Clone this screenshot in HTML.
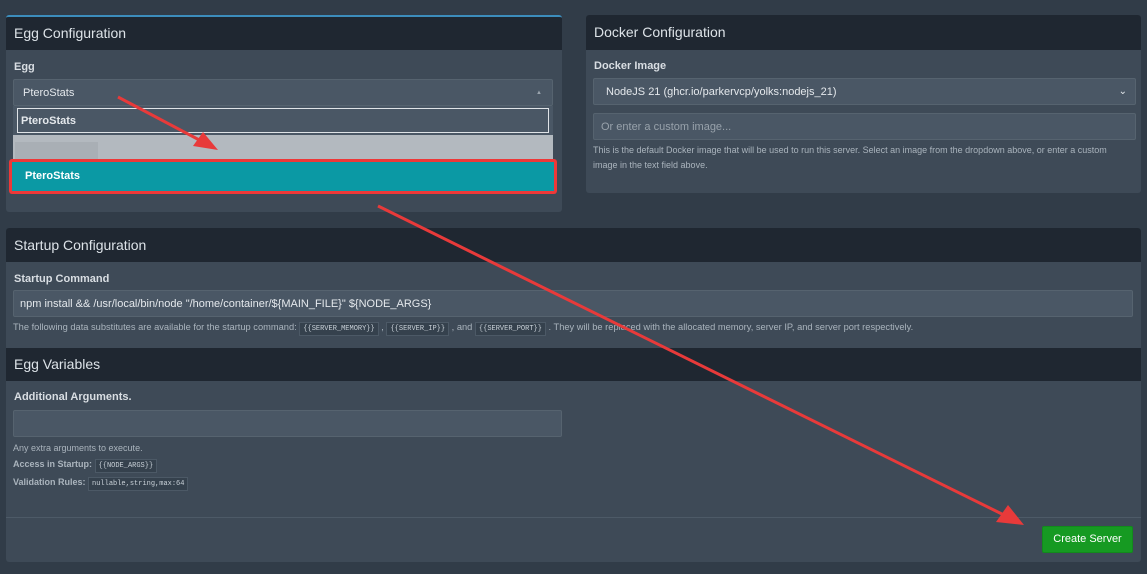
<!DOCTYPE html>
<html><head><style>
*{box-sizing:border-box;margin:0;padding:0}
body{width:1147px;height:574px;background:#313c48;font-family:"Liberation Sans",sans-serif;color:#cad1d8;position:relative;overflow:hidden;font-size:11px}
.box{position:absolute;background:#3e4a57;border-radius:3px;overflow:hidden}
.hd{background:#1f2731;height:34px;color:#dde3e8;font-size:14px;padding:9px 8px}
.lbl{position:absolute;font-weight:bold;font-size:11px;color:#d9dee3}
.inp{position:absolute;background:#4a5765;border:1px solid #56636f;border-radius:2px;color:#e4e8ec;font-size:11px;padding:0 12px;display:flex;align-items:center}
.help{position:absolute;font-size:9px;color:#aab4bd;line-height:15px}
code{font-family:"Liberation Mono",monospace;font-size:7px;background:#35414d;border:1px solid #4c5966;padding:2px 3px;color:#c9d1d8}
</style></head><body>
<div class="box" style="left:6px;top:15px;width:556px;height:197px;border-top:2px solid #3c8dbc">
<div class="hd" style="height:33px;padding-top:8px">Egg Configuration</div>
<div class="lbl" style="left:8px;top:44px">Egg</div>
<div class="inp" style="left:7px;top:62px;width:540px;height:27px;padding-left:9px">PteroStats<span style="position:absolute;right:10px;font-size:6px;color:#9aa4ad">▲</span></div>
<div style="position:absolute;left:7px;top:89px;width:540px;height:29px;background:#4a5765"></div>
<div style="position:absolute;left:11px;top:91px;width:532px;height:25px;border:1px solid #dfe3e7;color:#e4e8ec;font-weight:bold;font-size:11px;padding:6px 3px">PteroStats</div>
<div style="position:absolute;left:7px;top:118px;width:540px;height:24px;background:#b3b9bf"></div>
<div style="position:absolute;left:9px;top:125px;width:83px;height:17px;background:#a9afb5"></div>
<div style="position:absolute;left:3px;top:142px;width:548px;height:35px;background:#ee3838;border-radius:3px;padding:3px"><div style="background:#0b99a4;height:29px;color:#fff;font-weight:bold;font-size:11px;padding:8px 13px">PteroStats</div></div>
</div>
<div class="box" style="left:586px;top:15px;width:555px;height:178px">
<div class="hd" style="padding-top:9px;height:35px">Docker Configuration</div>
<div class="lbl" style="left:8px;top:45px">Docker Image</div>
<div class="inp" style="left:7px;top:63px;width:543px;height:27px;font-size:11px">NodeJS 21 (ghcr.io/parkervcp/yolks:nodejs_21)<span style="position:absolute;right:8px;font-size:10px">⌄</span></div>
<div class="inp" style="left:7px;top:98px;width:543px;height:27px;color:#98a2ab;padding-left:7px">Or enter a custom image...</div>
<div class="help" style="left:7px;top:128px;width:530px">This is the default Docker image that will be used to run this server. Select an image from the dropdown above, or enter a custom image in the text field above.</div>
</div>
<div class="box" style="left:6px;top:228px;width:1135px;height:334px">
<div class="hd" style="padding-top:9px">Startup Configuration</div>
<div class="lbl" style="left:8px;top:45px">Startup Command</div>
<div class="inp" style="left:7px;top:62px;width:1120px;height:27px;padding-left:6px">npm install &amp;&amp; /usr/local/bin/node "/home/container/${MAIN_FILE}" ${NODE_ARGS}</div>
<div class="help" style="left:7px;top:92px;font-size:9.3px">The following data substitutes are available for the startup command: <code>{{SERVER_MEMORY}}</code> , <code>{{SERVER_IP}}</code> , and <code>{{SERVER_PORT}}</code> . They will be replaced with the allocated memory, server IP, and server port respectively.</div>
<div class="hd" style="position:absolute;left:0;top:120px;width:100%;height:33px;padding-top:8px">Egg Variables</div>
<div class="lbl" style="left:8px;top:163px">Additional Arguments.</div>
<div class="inp" style="left:7px;top:182px;width:549px;height:27px"></div>
<div class="help" style="left:7px;top:212px;line-height:16px">Any extra arguments to execute.<br><b>Access in Startup:</b> <code>{{NODE_ARGS}}</code><br><b>Validation Rules:</b> <code>nullable,string,max:64</code></div>
<div style="position:absolute;left:0;top:289px;width:100%;height:1px;background:#4d5a67"></div>
<div style="position:absolute;left:1036px;top:298px;width:91px;height:27px;background:#169a22;border:1px solid #128a1c;border-radius:2px;color:#fff;font-size:11px;text-align:center;line-height:25px">Create Server</div>
</div>
<svg style="position:absolute;left:0;top:0" width="1147" height="574">
<g stroke="#e83a3a" stroke-width="3" fill="#e83a3a">
<line x1="118" y1="97" x2="205" y2="143"/>
<polygon points="218,150 193,146 203,132" stroke="none"/>
<line x1="378" y1="206" x2="1008" y2="517"/>
<polygon points="1024,525 996,522 1008,505" stroke="none"/>
</g></svg>
</body></html>
